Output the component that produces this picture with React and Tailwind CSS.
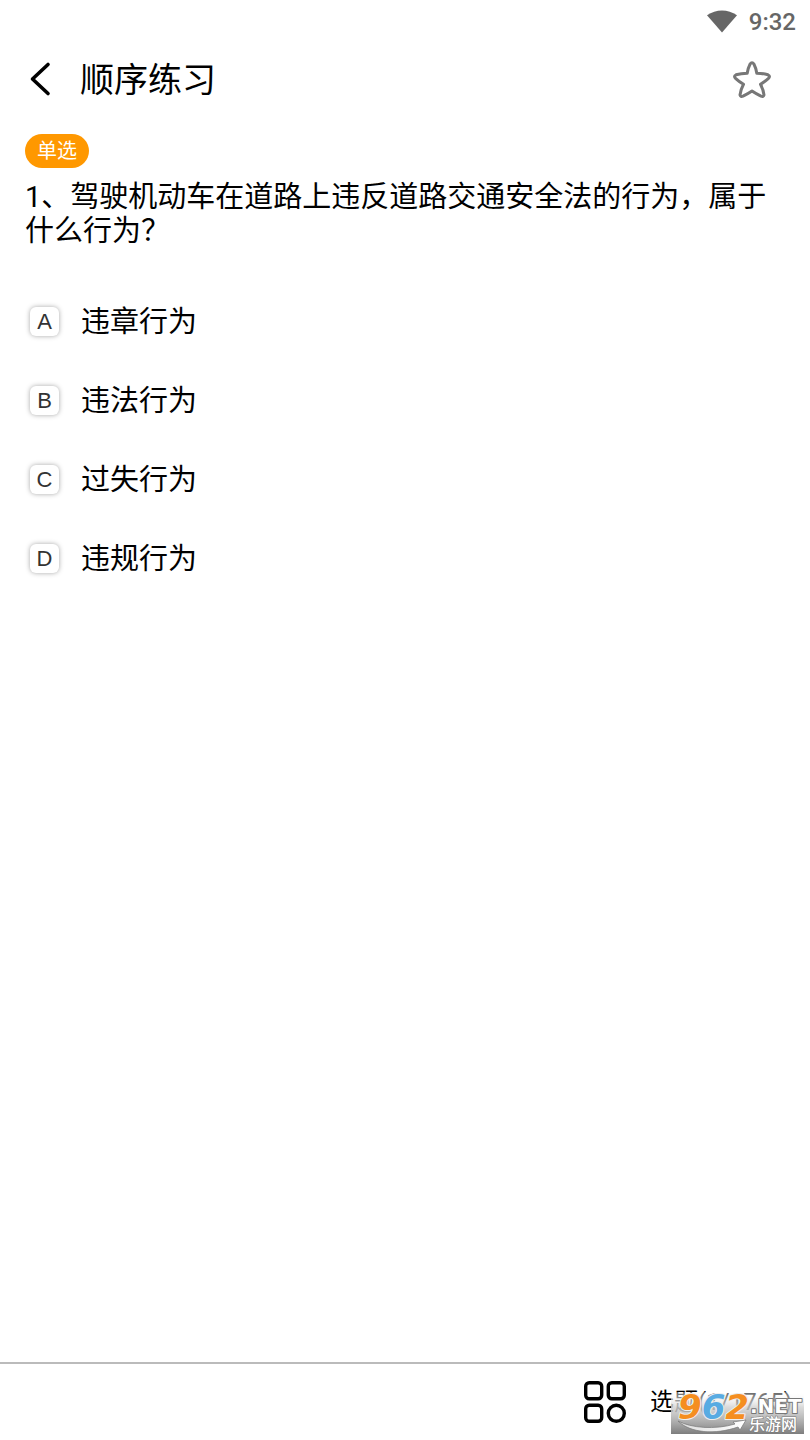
import React, { useState } from "react";

const options = [
  { key: "A", text: "违章行为" },
  { key: "B", text: "违法行为" },
  { key: "C", text: "过失行为" },
  { key: "D", text: "违规行为" },
];

function StatusBar() {
  return (
    <div className="flex h-10 items-center justify-end gap-3 pr-3.5 pt-1 text-[#666]">
      <svg width="30" height="24" viewBox="0 0 30 24" fill="currentColor" aria-hidden="true">
        <path d="M0 5.200C9-1.200 21-1.200 30 5.200L15 22.500Z" />
      </svg>
      <span className="text-2xl font-medium">9:32</span>
    </div>
  );
}

function Watermark() {
  return (
    <svg
      className="absolute right-1.5 bottom-1.5 overflow-visible"
      width="133"
      height="42"
      viewBox="0 0 133 42"
      role="img"
      aria-label="962.NET 乐游网"
    >
      <defs>
        <linearGradient id="wmBg" x1="0" y1="0" x2="0" y2="1">
          <stop offset="0" stopColor="#fff" stopOpacity="0" />
          <stop offset="0.35" stopColor="#ccc" stopOpacity="0.7" />
          <stop offset="1" stopColor="#7d7d7d" />
        </linearGradient>
        <linearGradient id="wmSwoosh" x1="0" y1="0" x2="1" y2="0">
          <stop offset="0" stopColor="#ddd" />
          <stop offset="1" stopColor="#fff" />
        </linearGradient>
      </defs>
      <rect width="133" height="42" fill="#fff" fillOpacity="0.4" />
      <rect width="133" height="42" fill="url(#wmBg)" />
      <path
        d="M7 29C20 36 44 38 64 32L62 30L75 28L69 38L67 35C44 43 19 41 7 29Z"
        fill="url(#wmSwoosh)"
        stroke="#777"
        strokeWidth="0.7"
      />
      <g
        fontFamily="'DejaVu Sans', sans-serif"
        fontWeight="700"
        strokeLinejoin="round"
        paintOrder="stroke"
      >
        <text x="7" y="27" fontSize="34" fontStyle="italic" stroke="#eee" strokeWidth="2">
          <tspan fill="#f58e20">9</tspan>
          <tspan fill="#58abe2">6</tspan>
          <tspan fill="#f58e20">2</tspan>
        </text>
        <text x="79" y="21" fontSize="20" fill="#fff" stroke="#777" strokeWidth="2">
          .NET
        </text>
      </g>
      <text
        x="78"
        y="38"
        fontSize="16"
        fontWeight="500"
        fontFamily="'Noto Sans CJK SC', sans-serif"
        fill="#fff"
        stroke="#777"
        strokeWidth="1"
        paintOrder="stroke"
      >
        乐游网
      </text>
    </svg>
  );
}

export default function App() {
  const [answer, setAnswer] = useState("");
  const [starred, setStarred] = useState(false);

  return (
    <div
      lang="zh-CN"
      className="relative flex min-h-screen flex-col bg-white font-[Roboto,'Noto_Sans_CJK_SC',sans-serif] text-black"
    >
      <StatusBar />

      {/* Header */}
      <header className="flex h-20 items-center px-6">
        <button type="button" aria-label="返回" className="flex h-10 w-8 items-center">
          <svg width="32" height="40" viewBox="0 0 32 40" fill="none" stroke="currentColor" strokeWidth="3.6" strokeLinecap="round" strokeLinejoin="round">
            <path d="M24 4.500L8.500 19L24 33.500" />
          </svg>
        </button>
        <h1 className="ml-6 flex-1 text-[34px] leading-10">顺序练习</h1>
        <button
          type="button"
          aria-label="收藏"
          aria-pressed={starred}
          onClick={() => setStarred(!starred)}
          className="mr-3.5 text-[#777]"
        >
          <svg width="40" height="40" viewBox="0 0 40 40" fill={starred ? "currentColor" : "none"} stroke="currentColor" strokeWidth="3" strokeLinejoin="round">
            <path d="M18 4.200Q20 1.400 22 4.200Q24 8 24.800 13.200Q31 13.300 36 14.800Q38.600 16 36.500 18.300Q33 21.500 28.500 24.300Q31.500 30 32 35Q31.500 37.200 29 36.200Q24.500 34 20 31Q15.500 34 11 36.200Q8.500 37.200 8 35Q8.500 30 11.500 24.300Q7 21.500 3.500 18.300Q1.400 16 4 14.800Q9 13.300 15.200 13.200Q16 8 18 4.200Z" />
          </svg>
        </button>
      </header>

      {/* Question */}
      <main className="flex-1 px-[25px] pt-3.5">
        <span className="flex h-[34px] w-16 items-center justify-center rounded-full bg-[#ff9800] text-xl text-white">
          单选
        </span>

        <fieldset>
          <legend className="pt-3 text-[29px] leading-[34px]">
            1、驾驶机动车在道路上违反道路交通安全法的行为，属于什么行为？
          </legend>

          <div className="mt-[34px] flex flex-col">
            {options.map((o) => (
              <label key={o.key} className="flex h-[79px] cursor-pointer items-center">
                <input
                  type="radio"
                  name="answer"
                  value={o.key}
                  checked={answer === o.key}
                  onChange={() => setAnswer(o.key)}
                  className="peer sr-only"
                />
                <span className="ml-[5px] flex size-[29px] items-center justify-center rounded-md bg-white font-['Liberation_Sans',sans-serif] text-[22px] text-[#333] shadow-[0_0_5px_rgba(0,0,0,0.35)] peer-checked:bg-[#ff9800] peer-checked:text-white">
                  {o.key}
                </span>
                <span className="ml-[22px] text-[29px] leading-[34px]">{o.text}</span>
              </label>
            ))}
          </div>
        </fieldset>
      </main>

      {/* Footer */}
      <footer className="flex h-[78px] items-center justify-end border-t-2 border-[#bbb] pr-[18px]">
        <button type="button" className="flex items-center gap-6 text-2xl">
          <svg width="42" height="42" viewBox="0 0 42 42" fill="none" stroke="currentColor" strokeWidth="3.4" aria-hidden="true">
            <rect x="1.700" y="1.700" width="16" height="16" rx="3.500" />
            <rect x="24.300" y="1.700" width="16" height="16" rx="3.500" />
            <rect x="1.700" y="24.300" width="16" height="16" rx="3.500" />
            <circle cx="32.300" cy="32.300" r="8" />
          </svg>
          <span>选题(1/1765)</span>
        </button>
      </footer>

      <Watermark />
    </div>
  );
}
